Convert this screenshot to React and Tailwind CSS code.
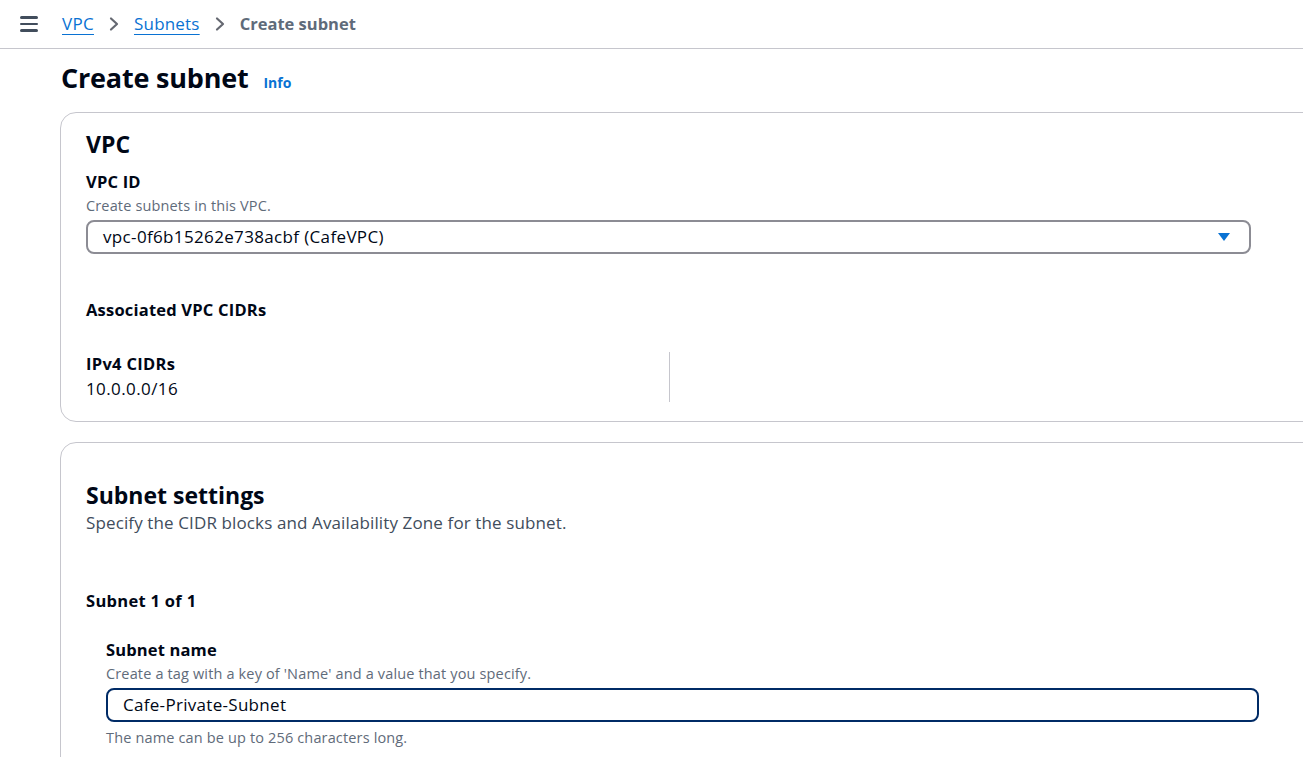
import React from "react";

const font = { fontFamily: '"Open Sans", "Noto Sans", Arial, sans-serif' };

function Chevron() {
  return (
    <svg width="12" height="16" viewBox="0 0 12 16" className="mx-[14px]">
      <path d="M3 2.5 L9 8 L3 13.5" fill="none" stroke="#656871" strokeWidth="2.2" strokeLinecap="round" strokeLinejoin="round" />
    </svg>
  );
}

export default function App() {
  return (
    <div className="w-[1303px] h-[757px] overflow-hidden bg-white text-[#000716]" style={font}>
      {/* Top bar */}
      <div className="h-[49px] border-b border-[#c6c6cd] flex items-center">
        <div className="ml-[20px] w-[18px] flex flex-col gap-[4px]">
          <span className="block h-[2.5px] bg-[#414d5c] rounded-sm" />
          <span className="block h-[2.5px] bg-[#414d5c] rounded-sm" />
          <span className="block h-[2.5px] bg-[#414d5c] rounded-sm" />
        </div>
        <div className="ml-[24px] flex items-center text-[17px] leading-[22px]">
          <span className="text-[#0972d3] underline underline-offset-[4px] decoration-[1px] tracking-[0.3px]">VPC</span>
          <Chevron />
          <span className="text-[#0972d3] underline underline-offset-[4px] decoration-[1px] tracking-[0.2px]">Subnets</span>
          <Chevron />
          <span className="font-bold text-[16.5px] text-[#5f6b7a]">Create subnet</span>
        </div>
      </div>

      {/* Title */}
      <div className="ml-[61px] mt-[12px] flex items-baseline">
        <h1 className="text-[27px] leading-[34px] font-bold tracking-[-0.2px]">Create subnet</h1>
        <span className="ml-[15px] text-[14px] font-bold text-[#0972d3]">Info</span>
      </div>

      {/* Card 1 */}
      <div className="ml-[60px] mt-[17px] w-[1300px] border border-[#c6c6cd] rounded-[16px] pl-[25px] pt-[16px] pb-[19px]">
        <h2 className="text-[23px] leading-[30px] font-bold">VPC</h2>
        <div className="mt-[12px] text-[16.5px] leading-[22px] font-bold tracking-[0.2px]">VPC ID</div>
        <div className="mt-[3px] text-[14.5px] leading-[20px] text-[#5f6b7a] tracking-[0.15px]">Create subnets in this VPC.</div>
        <div className="mt-[4px] w-[1165px] h-[34px] border-2 border-[#8c8c94] rounded-[8px] flex items-center justify-between pl-[15px] pr-[18px]">
          <span className="text-[17px] leading-[22px] tracking-[0.35px]">vpc-0f6b15262e738acbf (CafeVPC)</span>
          <svg width="14" height="10" viewBox="0 0 14 10">
            <path d="M1 1 H13 L7 9 Z" fill="#0972d3" />
          </svg>
        </div>
        <div className="mt-[45px] text-[16.5px] leading-[22px] font-bold tracking-[0.2px]">Associated VPC CIDRs</div>
        <div className="mt-[31px] flex">
          <div className="w-[583px]">
            <div className="text-[16.5px] leading-[22px] font-bold mt-[1px] tracking-[0.3px]">IPv4 CIDRs</div>
            <div className="mt-[3px] text-[17px] leading-[22px] tracking-[0.4px]">10.0.0.0/16</div>
          </div>
          <div className="border-l border-[#c6c6cd] h-[50px]" />
        </div>
      </div>

      {/* Card 2 */}
      <div className="ml-[60px] mt-[20px] w-[1300px] border border-[#c6c6cd] rounded-[16px] pl-[25px] pt-[37px] pb-[40px]">
        <h2 className="text-[23px] leading-[30px] font-bold">Subnet settings</h2>
        <div className="mt-[2px] text-[17px] leading-[22px] text-[#414d5c] tracking-[0.12px]">Specify the CIDR blocks and Availability Zone for the subnet.</div>
        <div className="mt-[56px] text-[16.5px] leading-[22px] font-bold tracking-[0.3px]">Subnet 1 of 1</div>
        <div className="ml-[20px] mt-[27px]">
          <div className="text-[16.5px] leading-[22px] font-bold tracking-[0.15px]">Subnet name</div>
          <div className="mt-[3px] text-[14.5px] leading-[20px] text-[#5f6b7a] tracking-[0.15px]">Create a tag with a key of 'Name' and a value that you specify.</div>
          <div className="mt-[4px] w-[1153px] h-[34px] border-2 border-[#002b66] rounded-[8px] flex items-center pl-[15px]">
            <span className="text-[17px] leading-[22px] tracking-[0.3px]">Cafe-Private-Subnet</span>
          </div>
          <div className="mt-[6px] text-[14.5px] leading-[20px] text-[#5f6b7a] tracking-[0.15px]">The name can be up to 256 characters long.</div>
        </div>
      </div>
    </div>
  );
}
